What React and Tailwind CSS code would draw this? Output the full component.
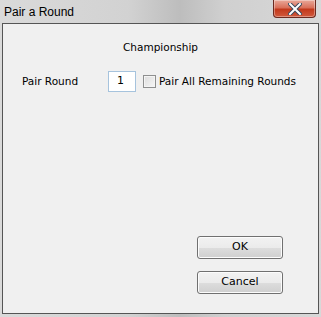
import React from 'react';

function CloseButton() {
  return (
    <div className="absolute right-[5px] top-0 flex h-[18px] w-[43px] items-center justify-center rounded-b-[4px] border border-t-0 border-[#6b2a20] bg-[linear-gradient(#e9a99a_0%,#d9705a_45%,#c2391c_55%,#d1593c_100%)] shadow-[inset_0_0_0_1px_rgba(255,255,255,0.35)]">
      <svg width="14" height="12" viewBox="0 0 14 12">
        <path d="M2 1 L12 11 M12 1 L2 11" stroke="#3c4a5c" strokeWidth="4" strokeLinecap="square" />
        <path d="M2 1 L12 11 M12 1 L2 11" stroke="#ffffff" strokeWidth="2" strokeLinecap="square" />
      </svg>
    </div>
  );
}

function Button({ children }) {
  return (
    <div className="flex h-[23px] w-[86px] items-center justify-center rounded-[3px] border border-[#707070] bg-[linear-gradient(#f2f2f2_0%,#ebebeb_50%,#dddddd_51%,#cfcfcf_100%)] text-[11px] text-black shadow-[inset_0_0_0_1px_#fcfcfc]">
      {children}
    </div>
  );
}

export default function App() {
  return (
    <div
      className="relative flex h-[317px] w-[321px] flex-col bg-[linear-gradient(90deg,#dadada_0%,#d2d2d2_40%,#bdbdbd_56%,#d0d0d0_70%,#d8d8d8_100%)] text-black"
      style={{ fontFamily: 'Tahoma, "DejaVu Sans", sans-serif' }}
    >
      <div className="flex h-[23px] items-center pl-[4px] text-[12px] text-black" style={{ fontFamily: '"Liberation Sans", Arial, sans-serif' }}>
        Pair a Round
      </div>
      <CloseButton />
      <div className="mx-[2px] mb-[3px] flex flex-1 flex-col border border-[#555555] bg-[#f0f0f0]">
        <div className="mt-[16px] text-center text-[10.5px]">Championship</div>
        <div className="mt-[15px] flex items-center">
          <span className="ml-[19px] w-[86px] pt-[1px] text-[10.5px]">Pair Round</span>
          <div className="flex h-[21px] w-[28px] items-center border border-[#a6c3dd] bg-white pl-[8px] text-[11px]">1</div>
          <div className="ml-[7px] h-[13px] w-[13px] border border-[#8e8f8f] bg-[linear-gradient(135deg,#dcdcdc,#f7f7f7)] shadow-[inset_0_0_0_1px_#f4f4f4]" />
          <span className="ml-[3px] pt-[1px] text-[10.5px]">Pair All Remaining Rounds</span>
        </div>
        <div className="flex-1" />
        <div className="flex flex-col items-end gap-[12px] pb-[19px] pr-[35px]">
          <Button>OK</Button>
          <Button>Cancel</Button>
        </div>
      </div>
    </div>
  );
}
